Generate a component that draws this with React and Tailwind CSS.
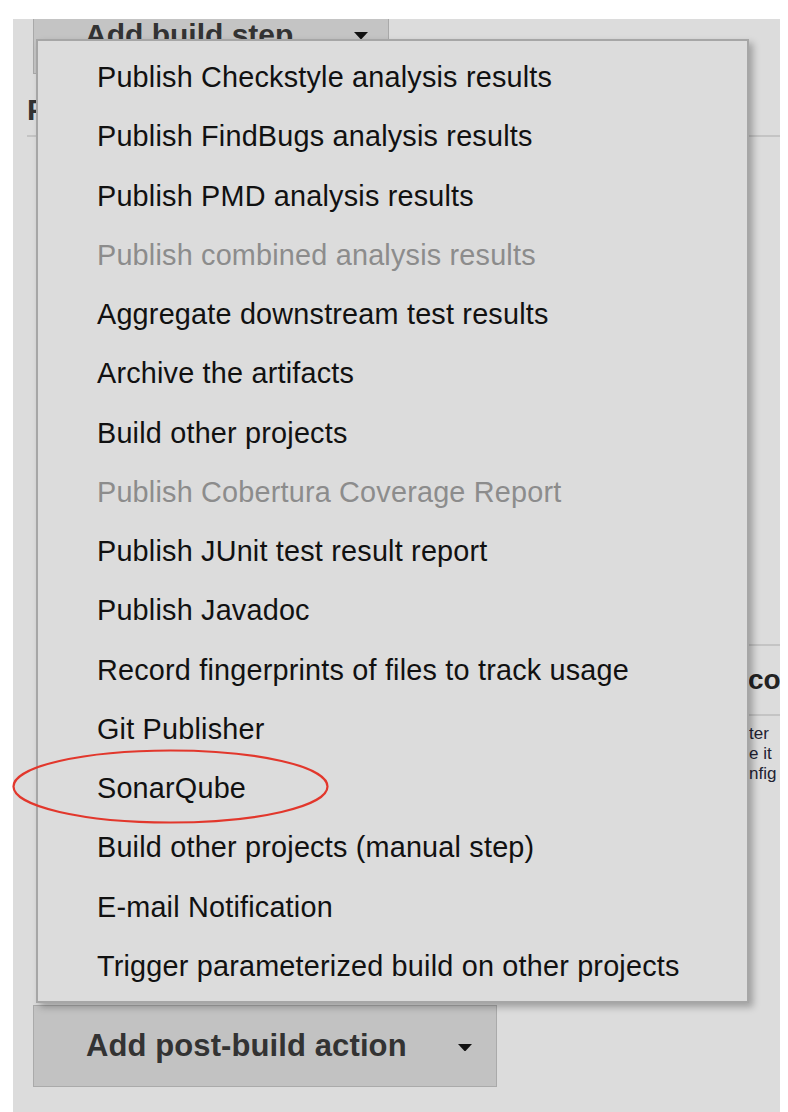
import React from "react";

const items = [
  ["Publish Checkstyle analysis results", false],
  ["Publish FindBugs analysis results", false],
  ["Publish PMD analysis results", false],
  ["Publish combined analysis results", true],
  ["Aggregate downstream test results", false],
  ["Archive the artifacts", false],
  ["Build other projects", false],
  ["Publish Cobertura Coverage Report", true],
  ["Publish JUnit test result report", false],
  ["Publish Javadoc", false],
  ["Record fingerprints of files to track usage", false],
  ["Git Publisher", false],
  ["SonarQube", false],
  ["Build other projects (manual step)", false],
  ["E-mail Notification", false],
  ["Trigger parameterized build on other projects", false],
];

function Arrow() {
  return (
    <svg width="16" height="9" viewBox="0 0 16 9" className="shrink-0">
      <path d="M1 1 L15 1 L9 7.5 Q8 8.5 7 7.5 Z" fill="#111" />
    </svg>
  );
}

export default function App() {
  return (
    <div
      className="relative w-[788px] h-[1112px] bg-white overflow-hidden"
      style={{ fontFamily: '"Liberation Sans", Arial, sans-serif' }}
    >
      {/* page panel */}
      <div className="ml-[13px] mt-[19px] w-[767px] h-[1093px] bg-[#dcdcdc] overflow-hidden flex flex-col">
        {/* Add build step button (cut off at top) */}
        <div className="ml-[20px] mt-[-25px] w-[356px] h-[80px] shrink-0 bg-[#c4c4c4] border border-[#a9a9a9] flex items-center">
          <span className="ml-[51px] text-[30px] font-bold text-[#333] tracking-[0px]">Add build step</span>
          <span className="ml-[60px] mt-[2px]"><Arrow /></span>
        </div>

        {/* section header */}
        <div className="mt-[21px] ml-[14px] h-[42px] shrink-0 border-b-2 border-[#c4c4c4] flex items-start">
          <span className="text-[30px] font-bold text-[#333] leading-[30px]">Post-build Actions</span>
        </div>

        {/* right-side fragments */}
        <div className="mt-[507px] ml-[735px] w-[60px] shrink-0 border-t-2 border-[#c4c4c4] h-[70px] flex items-center">
          <span className="text-[28px] font-bold text-[#222] whitespace-nowrap leading-none">col</span>
        </div>
        <div className="ml-[735px] w-[60px] shrink-0 border-t-2 border-[#c4c4c4] pt-[8px] pl-[1px] text-[17px] leading-[20px] text-[#223] whitespace-nowrap">
          <div>ter</div>
          <div>e it</div>
          <div>nfig</div>
        </div>

        {/* Add post-build action button */}
        <div className="mt-[221px] ml-[20px] w-[464px] h-[82px] shrink-0 bg-[#c2c2c2] border border-[#aaaaaa] flex items-center">
          <span className="ml-[52px] text-[31px] font-bold text-[#333] tracking-[0.1px]">Add post-build action</span>
          <span className="ml-[50px] mt-[2px]"><Arrow /></span>
        </div>
      </div>

      {/* dropdown menu */}
      <div className="absolute left-[36px] top-[39px] w-[713px] h-[964px] bg-[#dcdcdc] border-2 border-[#a6a6a6] shadow-[4px_4px_7px_rgba(0,0,0,0.28)] pt-[7px]">
        {items.map(([label, disabled]) => (
          <div
            key={label}
            className={
              "h-[59.25px] pl-[59px] flex items-center text-[28.8px] tracking-[0.2px] whitespace-nowrap " +
              (disabled ? "text-[#8c8c8c]" : "text-[#111]")
            }
          >
            {label}
          </div>
        ))}
      </div>

      {/* red highlight ellipse */}
      <svg
        className="absolute left-0 top-[740px] pointer-events-none"
        width="340"
        height="95"
        viewBox="0 0 340 95"
      >
        <ellipse cx="170.5" cy="46.5" rx="157" ry="36" fill="none" stroke="#e2372c" strokeWidth="2.2" />
      </svg>
    </div>
  );
}
